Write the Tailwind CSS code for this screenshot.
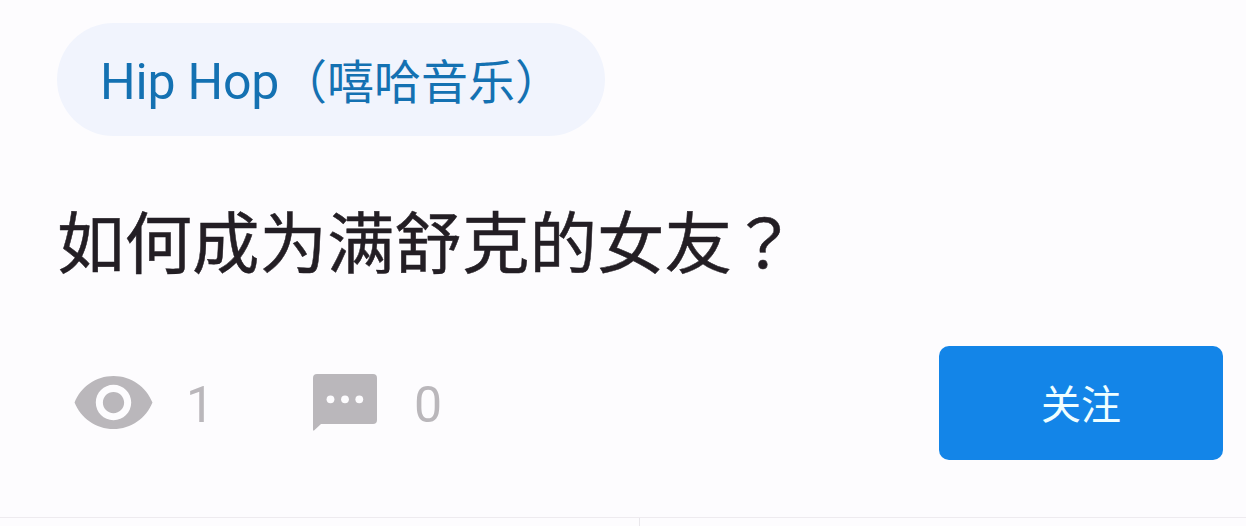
<!DOCTYPE html>
<html lang="zh-CN">
<head>
    <meta charset="utf-8"/>
    <meta content="width=device-width, initial-scale=1" name="viewport"/>
    <title>如何成为满舒克的女友？</title>
    <script src="https://cdn.jsdelivr.net/npm/@tailwindcss/browser@4"></script>
    <style>
        body {
            font-family: Roboto, 'Noto Sans CJK SC', sans-serif;
        }
    </style>
</head>
<body class="bg-[#fdfcfe] h-[526px] overflow-hidden flex flex-col">
    <main class="h-[516px] shrink-0 pl-[57px] pr-[23px] pt-[23px]">
        <!-- Topic -->
        <a class="flex items-center w-[548px] h-[113px] pl-[43px] rounded-full bg-[#f1f4fd] text-[#1471b2] whitespace-nowrap" href="#">
            <span class="w-[180px] text-[50px] leading-[60px] tracking-[-0.2px] pt-1">Hip Hop</span>
            <span class="text-[47px] leading-[60px] pt-[7px]">（嘻哈音乐）</span>
        </a>

        <h1 class="mt-[55px] h-[102px] text-[67.5px] leading-[96px] text-[#231e24] [-webkit-text-stroke:0.5px_#231e24] whitespace-nowrap">如何成为满舒克的女友<span class="font-['Noto_Sans_CJK_JP'] -ml-0.5" lang="ja">？</span></h1>

        <div class="mt-[53px] h-[114px] flex items-center justify-between">
            <div class="flex items-center pb-0.5 text-[#bab7bb] text-[50px] leading-[60px]">
                <svg aria-hidden="true" class="w-[85px] h-[85px] ml-[14px]" fill="currentColor" viewBox="0 0 24 24">
                    <path d="M12 4.5C7 4.5 2.73 7.61 1 12c1.73 4.39 6 7.5 11 7.5s9.27-3.11 11-7.5c-1.73-4.39-6-7.5-11-7.5zM12 17c-2.76 0-5-2.24-5-5s2.24-5 5-5 5 2.24 5 5-2.24 5-5 5zm0-8c-1.66 0-3 1.34-3 3s1.34 3 3 3 3-1.34 3-3-1.34-3-3-3z"/>
                </svg>
                <span class="w-[157px] pl-[30px] pt-[5px]">1</span>
                <svg aria-hidden="true" class="w-16 h-[57px]" fill="none" viewBox="0 0 64 57">
                    <path d="M4 0h56q4 0 4 4v42q0 4-4 4H8l-7 6.5H0V4q0-4 4-4z" fill="currentColor"/>
                    <g fill="#fdfcfe">
                        <circle cx="17.5" cy="25.3" r="3.9"/>
                        <circle cx="32" cy="25.3" r="3.9"/>
                        <circle cx="46.3" cy="25.3" r="3.9"/>
                    </g>
                </svg>
                <span class="pl-[37px] pt-[5px]">0</span>
            </div>
            <button class="w-[284px] h-[114px] rounded-[10px] bg-[#1385e8] text-[#effeff] text-[40px] leading-[60px] pt-[6px]" type="button">关注</button>
        </div>
    </main>

    <footer class="h-[10px] shrink-0 mt-px border-t border-[#eeebef] flex">
        <div class="w-[640px] border-r border-[#e9e7eb]"></div>
        <div class="flex-1"></div>
    </footer>
</body>
</html>
